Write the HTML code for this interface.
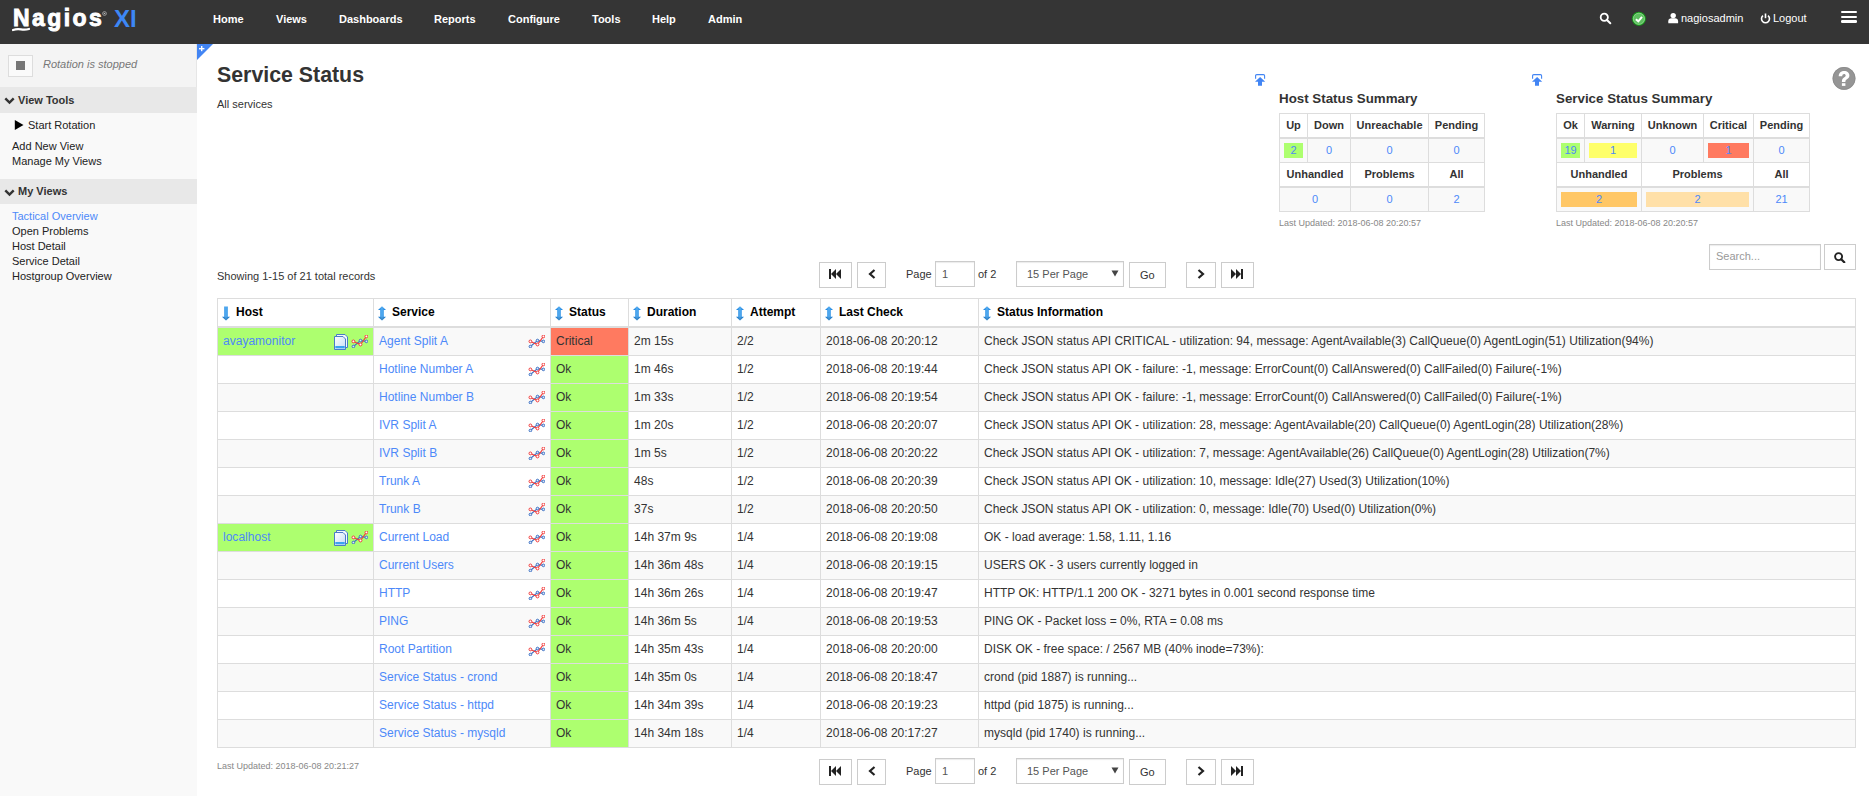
<!DOCTYPE html>
<html><head><meta charset="utf-8">
<style>
*{box-sizing:border-box;}
html,body{margin:0;padding:0;width:1869px;height:796px;overflow:hidden;background:#fff;font-family:"Liberation Sans",sans-serif;color:#333;}
a{color:#4d89f9;text-decoration:none;}
.abs{position:absolute;white-space:nowrap;}
#hdr{position:absolute;left:0;top:0;width:1869px;height:44px;background:#353535;overflow:hidden;}
#hdr .nav{position:absolute;top:13px;font-size:11px;font-weight:bold;color:#fff;white-space:nowrap;line-height:13px;}
#hdr .rt{position:absolute;top:12px;font-size:11px;color:#fff;white-space:nowrap;line-height:13px;}
#side{position:absolute;left:0;top:44px;width:197px;height:752px;background:#f9f9f9;}
#rot{position:absolute;left:0;top:0;width:197px;height:43px;background:#f4f4f4;border-right:1px solid #e6e6e6;}
.shead{position:absolute;left:0;width:197px;height:26px;background:#e8e8e8;font-size:11px;font-weight:bold;color:#333;}
.shead span{position:absolute;left:18px;top:7px;line-height:13px;}
.slink{position:absolute;left:12px;font-size:11px;color:#222;line-height:13px;white-space:nowrap;}
.btn{position:absolute;border:1px solid #ccc;background:#fff;}
.sum{position:absolute;border-collapse:separate;border-spacing:0;border-top:1px solid #ddd;border-left:1px solid #ddd;font-size:11px;}
.sum td{border-right:1px solid #ddd;border-bottom:1px solid #ddd;text-align:center;padding:0;height:24px;}
.sum tr.h td{font-weight:bold;background:#fff;color:#333;border-bottom:2px solid #ddd;height:25px;padding-bottom:2px;}
.sum tr.d td{background:#f9f9f9;color:#4d89f9;padding-bottom:1px;}
.box{display:block;margin:0 4px;height:15px;line-height:15px;}
#tbl td{letter-spacing:0.015px;}
#tbl{position:absolute;left:217px;top:298px;border-collapse:separate;border-spacing:0;table-layout:fixed;border-top:1px solid #ddd;border-left:1px solid #ddd;font-size:12px;}
#tbl th,#tbl td{border-right:1px solid #ddd;border-bottom:1px solid #ddd;padding:0 0 2px 5px;height:28px;white-space:nowrap;overflow:hidden;text-align:left;vertical-align:middle;position:relative;}
#tbl th{height:29px;border-bottom:2px solid #ddd;color:#000;font-weight:bold;background:#fff;padding:0 0 0 4px;}
#tbl tr.odd td{background:#f9f9f9;}
#tbl tr.even td{background:#fff;}
#tbl td.hup{background:#adff6f !important;}
#tbl td.ok{background:#adff6f !important;}
#tbl td.crit{background:#ff7a60 !important;}
#tbl th svg{vertical-align:middle;margin-right:5px;position:relative;top:1px;}
.gi{position:absolute;right:5px;top:7px;}
.di{position:absolute;right:24px;top:6px;}
.pg{position:absolute;font-size:11px;color:#333;}
</style></head><body>
<div id="hdr">
  
  <div class="abs" style="left:13px;top:3.5px;font-size:23px;font-weight:bold;color:#fff;letter-spacing:2.4px;line-height:28px;-webkit-text-stroke:0.9px #fff;">Nagios</div>
  <svg class="abs" style="left:102px;top:11px" width="5" height="5" viewBox="0 0 5 5"><circle cx="2.5" cy="2.5" r="1.9" fill="none" stroke="#bbb" stroke-width="0.7"/><circle cx="2.5" cy="2.5" r="0.8" fill="#bbb"/></svg>
  <div class="abs" style="left:114px;top:5px;font-size:24px;font-weight:bold;color:#3d87f5;line-height:28px;">XI</div>
  <svg class="abs" style="left:12px;top:27px" width="18" height="5" viewBox="0 0 18 5"><path d="M1,3 Q5,1.6 9,2.4 T17,2" fill="none" stroke="#fff" stroke-width="2.2" stroke-linecap="round"/></svg>
  <div class="nav" style="left:213px">Home</div>
  <div class="nav" style="left:276px">Views</div>
  <div class="nav" style="left:339px">Dashboards</div>
  <div class="nav" style="left:434px">Reports</div>
  <div class="nav" style="left:508px">Configure</div>
  <div class="nav" style="left:592px">Tools</div>
  <div class="nav" style="left:652px">Help</div>
  <div class="nav" style="left:708px">Admin</div>
  <!-- search icon -->
  <svg class="abs" style="left:1599px;top:12px" width="13" height="13" viewBox="0 0 13 13"><circle cx="5.3" cy="5.3" r="3.6" fill="none" stroke="#fff" stroke-width="1.8"/><line x1="7.9" y1="8" x2="11.3" y2="11.3" stroke="#fff" stroke-width="2" stroke-linecap="round"/></svg>
  <!-- green check -->
  <svg class="abs" style="left:1631px;top:11px" width="16" height="16" viewBox="0 0 16 16"><circle cx="7.9" cy="7.8" r="7.1" fill="#16941a"/><circle cx="7.9" cy="7.8" r="6" fill="#5dbf5f"/><circle cx="7.9" cy="7.8" r="5.6" fill="none" stroke="#9be09b" stroke-width="0.6"/><polyline points="4.9,8.2 7.3,10.3 11,5.9" fill="none" stroke="#fff" stroke-width="2"/></svg>
  <!-- user icon -->
  <svg class="abs" style="left:1668px;top:12px" width="11" height="12" viewBox="0 0 11 12"><circle cx="5.2" cy="3.6" r="2.7" fill="#fff"/><path d="M0.3,11.3 V9.2 C0.3,7.2 1.7,6.3 3.3,6.3 H7.1 C8.7,6.3 10.1,7.2 10.1,9.2 V11.3 Z" fill="#fff"/></svg>
  <div class="rt" style="left:1681px">nagiosadmin</div>
  <!-- power icon -->
  <svg class="abs" style="left:1760px;top:13px" width="11" height="11" viewBox="0 0 11 11"><path d="M3,2.6 A4,4 0 1 0 8,2.6" fill="none" stroke="#fff" stroke-width="1.6"/><line x1="5.5" y1="0.5" x2="5.5" y2="5.2" stroke="#fff" stroke-width="1.6"/></svg>
  <div class="rt" style="left:1773px">Logout</div>
  <!-- hamburger -->
  <div class="abs" style="left:1841px;top:11px;width:16px;height:2.4px;background:#fff;border-radius:1.2px;"></div>
  <div class="abs" style="left:1841px;top:15.7px;width:16px;height:2.4px;background:#fff;border-radius:1.2px;"></div>
  <div class="abs" style="left:1841px;top:20.4px;width:16px;height:2.4px;background:#fff;border-radius:1.2px;"></div>
</div>

<div id="side">
  <div id="rot">
    <div class="abs" style="left:8px;top:11px;width:25px;height:22px;border:1px solid #ddd;background:#fafafa;"></div>
    <div class="abs" style="left:16px;top:17px;width:9px;height:9px;background:#777;"></div>
    <div class="abs" style="left:43px;top:14px;font-size:11px;font-style:italic;color:#777;line-height:13px;">Rotation is stopped</div>
  </div>
  <div class="shead" style="top:43px"><svg class="abs" style="left:4px;top:10px" width="11" height="8" viewBox="0 0 11 8"><polyline points="1.3,1.4 5.5,5.6 9.7,1.4" fill="none" stroke="#333" stroke-width="2.4"/></svg><span>View Tools</span></div>
  <svg class="abs" style="left:14px;top:76px" width="10" height="10" viewBox="0 0 10 10"><polygon points="0.8,0 9.5,5 0.8,10" fill="#000"/></svg>
  <div class="slink" style="left:28px;top:75px">Start Rotation</div>
  <div class="slink" style="top:96px">Add New View</div>
  <div class="slink" style="top:111px">Manage My Views</div>
  <div class="shead" style="top:135px;height:25px"><svg class="abs" style="left:4px;top:10px" width="11" height="8" viewBox="0 0 11 8"><polyline points="1.3,1.4 5.5,5.6 9.7,1.4" fill="none" stroke="#333" stroke-width="2.4"/></svg><span style="top:6px">My Views</span></div>
  <div class="slink" style="top:166px;color:#4d89f9">Tactical Overview</div>
  <div class="slink" style="top:181px">Open Problems</div>
  <div class="slink" style="top:196px">Host Detail</div>
  <div class="slink" style="top:211px">Service Detail</div>
  <div class="slink" style="top:226px">Hostgroup Overview</div>
</div>
<!-- blue corner triangle -->
<svg class="abs" style="left:197px;top:44px" width="16" height="16" viewBox="0 0 16 16"><polygon points="0,0 16,0 0,16" fill="#4285f4"/><rect x="2" y="4" width="5.4" height="1.4" fill="#fff"/><rect x="4" y="2" width="1.4" height="5.2" fill="#fff"/></svg>

<div class="abs" style="left:217px;top:63px;font-size:21.33px;font-weight:bold;color:#333;line-height:25px;">Service Status</div>
<div class="abs" style="left:217px;top:98px;font-size:11px;color:#333;line-height:13px;">All services</div>

<!-- pins -->
<svg class="abs" style="left:1255px;top:74px" width="11" height="12" viewBox="0 0 11 12"><path d="M0.6,4.8 V1.8 Q0.6,0.6 1.8,0.6 H8.4 Q9.6,0.6 9.6,1.8 V4.8" fill="none" stroke="#4285f4" stroke-width="1.1"/><polygon points="5.1,2.9 0,7.7 3,7.7 3,11.8 7,11.8 7,7.7 10.2,7.7" fill="#4285f4"/></svg>
<svg class="abs" style="left:1532px;top:74px" width="11" height="12" viewBox="0 0 11 12"><path d="M0.6,4.8 V1.8 Q0.6,0.6 1.8,0.6 H8.4 Q9.6,0.6 9.6,1.8 V4.8" fill="none" stroke="#4285f4" stroke-width="1.1"/><polygon points="5.1,2.9 0,7.7 3,7.7 3,11.8 7,11.8 7,7.7 10.2,7.7" fill="#4285f4"/></svg>

<div class="abs" style="left:1279px;top:91px;font-size:13.33px;font-weight:bold;color:#333;line-height:15px;">Host Status Summary</div>
<table class="sum" style="left:1279px;top:113px;">
<tr class="h"><td style="width:28px">Up</td><td style="width:43px">Down</td><td style="width:78px">Unreachable</td><td style="width:56px">Pending</td></tr>
<tr class="d"><td><span class="box" style="background:#adff6f">2</span></td><td>0</td><td>0</td><td>0</td></tr>
<tr class="h"><td colspan="2">Unhandled</td><td>Problems</td><td>All</td></tr>
<tr class="d"><td colspan="2">0</td><td>0</td><td>2</td></tr>
</table>
<div class="abs" style="left:1279px;top:218px;font-size:9px;color:#888;line-height:11px;">Last Updated: 2018-06-08 20:20:57</div>

<div class="abs" style="left:1556px;top:91px;font-size:13.33px;font-weight:bold;color:#333;line-height:15px;">Service Status Summary</div>
<table class="sum" style="left:1556px;top:113px;">
<tr class="h"><td style="width:28px">Ok</td><td style="width:57px">Warning</td><td style="width:62px">Unknown</td><td style="width:50px">Critical</td><td style="width:56px">Pending</td></tr>
<tr class="d"><td><span class="box" style="background:#adff6f">19</span></td><td><span class="box" style="background:#feff6a">1</span></td><td>0</td><td><span class="box" style="background:#ff7a60">1</span></td><td>0</td></tr>
<tr class="h"><td colspan="2">Unhandled</td><td colspan="2">Problems</td><td>All</td></tr>
<tr class="d"><td colspan="2"><span class="box" style="background:#ffc766">2</span></td><td colspan="2"><span class="box" style="background:#ffe0a8">2</span></td><td>21</td></tr>
</table>
<div class="abs" style="left:1556px;top:218px;font-size:9px;color:#888;line-height:11px;">Last Updated: 2018-06-08 20:20:57</div>

<!-- help -->
<svg class="abs" style="left:1832px;top:67px" width="24" height="24" viewBox="0 0 24 24"><circle cx="12" cy="11.4" r="11.4" fill="#959595"/><circle cx="12" cy="11.4" r="11" fill="none" stroke="#8a8a8a" stroke-width="0.8"/><path d="M6.7,9.3 C6.7,5.8 9.3,4.1 12.2,4.1 C15.3,4.1 17.4,6 17.4,8.6 C17.4,10.8 16,11.8 14.6,12.6 C13.7,13.2 13.4,13.7 13.4,14.9 H9.9 C9.9,12.6 10.6,11.4 12,10.6 C13.2,9.9 13.7,9.4 13.7,8.6 C13.7,7.7 13,7.1 12.1,7.1 C11,7.1 10.3,7.9 10.2,9.3 Z" fill="#fff"/><rect x="9.9" y="16.2" width="3.5" height="2.7" fill="#fff"/></svg>

<div class="abs" style="left:217px;top:270px;font-size:11px;color:#333;line-height:13px;">Showing 1-15 of 21 total records</div>

<div class="btn" style="left:819px;top:262px;width:33px;height:26px;"></div>
<svg class="abs" style="left:829px;top:269px" width="12" height="10" viewBox="0 0 12 10"><rect x="0" y="0" width="2" height="10" fill="#222"/><polygon points="2,5 7,0 7,10" fill="#222"/><polygon points="7,5 12,0 12,10" fill="#222"/></svg>
<div class="btn" style="left:857px;top:262px;width:29px;height:26px;"></div>
<svg class="abs" style="left:868px;top:269px" width="8" height="10" viewBox="0 0 8 10"><polyline points="6.5,1 2,5 6.5,9" fill="none" stroke="#222" stroke-width="2.2"/></svg>
<div class="pg" style="left:906px;top:268px;line-height:13px;">Page</div>
<div class="btn" style="left:935px;top:261px;width:40px;height:26px;box-shadow:inset 0 1px 1px rgba(0,0,0,.08);"></div>
<div class="pg" style="left:942px;top:268px;line-height:13px;color:#555">1</div>
<div class="pg" style="left:978px;top:268px;line-height:13px;">of 2</div>
<div class="btn" style="left:1016px;top:261px;width:108px;height:26px;box-shadow:inset 0 1px 1px rgba(0,0,0,.08);"></div>
<div class="pg" style="left:1027px;top:268px;line-height:13px;color:#555">15 Per Page</div>
<svg class="abs" style="left:1111px;top:270px" width="8" height="7" viewBox="0 0 8 7"><polygon points="0.5,0.5 7.5,0.5 4,6.5" fill="#444"/></svg>
<div class="btn" style="left:1129px;top:262px;width:37px;height:26px;"></div>
<div class="pg" style="left:1140px;top:269px;line-height:13px;">Go</div>
<div class="btn" style="left:1186px;top:262px;width:30px;height:26px;"></div>
<svg class="abs" style="left:1197px;top:269px" width="8" height="10" viewBox="0 0 8 10"><polyline points="1.5,1 6,5 1.5,9" fill="none" stroke="#222" stroke-width="2.2"/></svg>
<div class="btn" style="left:1221px;top:262px;width:33px;height:26px;"></div>
<svg class="abs" style="left:1231px;top:269px" width="12" height="10" viewBox="0 0 12 10"><rect x="10" y="0" width="2" height="10" fill="#222"/><polygon points="10,5 5,0 5,10" fill="#222"/><polygon points="5,5 0,0 0,10" fill="#222"/></svg>
<div class="btn" style="left:819px;top:759px;width:33px;height:26px;"></div>
<svg class="abs" style="left:829px;top:766px" width="12" height="10" viewBox="0 0 12 10"><rect x="0" y="0" width="2" height="10" fill="#222"/><polygon points="2,5 7,0 7,10" fill="#222"/><polygon points="7,5 12,0 12,10" fill="#222"/></svg>
<div class="btn" style="left:857px;top:759px;width:29px;height:26px;"></div>
<svg class="abs" style="left:868px;top:766px" width="8" height="10" viewBox="0 0 8 10"><polyline points="6.5,1 2,5 6.5,9" fill="none" stroke="#222" stroke-width="2.2"/></svg>
<div class="pg" style="left:906px;top:765px;line-height:13px;">Page</div>
<div class="btn" style="left:935px;top:758px;width:40px;height:26px;box-shadow:inset 0 1px 1px rgba(0,0,0,.08);"></div>
<div class="pg" style="left:942px;top:765px;line-height:13px;color:#555">1</div>
<div class="pg" style="left:978px;top:765px;line-height:13px;">of 2</div>
<div class="btn" style="left:1016px;top:758px;width:108px;height:26px;box-shadow:inset 0 1px 1px rgba(0,0,0,.08);"></div>
<div class="pg" style="left:1027px;top:765px;line-height:13px;color:#555">15 Per Page</div>
<svg class="abs" style="left:1111px;top:767px" width="8" height="7" viewBox="0 0 8 7"><polygon points="0.5,0.5 7.5,0.5 4,6.5" fill="#444"/></svg>
<div class="btn" style="left:1129px;top:759px;width:37px;height:26px;"></div>
<div class="pg" style="left:1140px;top:766px;line-height:13px;">Go</div>
<div class="btn" style="left:1186px;top:759px;width:30px;height:26px;"></div>
<svg class="abs" style="left:1197px;top:766px" width="8" height="10" viewBox="0 0 8 10"><polyline points="1.5,1 6,5 1.5,9" fill="none" stroke="#222" stroke-width="2.2"/></svg>
<div class="btn" style="left:1221px;top:759px;width:33px;height:26px;"></div>
<svg class="abs" style="left:1231px;top:766px" width="12" height="10" viewBox="0 0 12 10"><rect x="10" y="0" width="2" height="10" fill="#222"/><polygon points="10,5 5,0 5,10" fill="#222"/><polygon points="5,5 0,0 0,10" fill="#222"/></svg>

<!-- search -->
<div class="btn" style="left:1709px;top:244px;width:112px;height:26px;box-shadow:inset 0 1px 1px rgba(0,0,0,.08);"></div>
<div class="abs" style="left:1716px;top:250px;font-size:11px;color:#999;line-height:13px;">Search...</div>
<div class="btn" style="left:1824px;top:244px;width:32px;height:26px;"></div>
<svg class="abs" style="left:1834px;top:252px" width="12" height="11" viewBox="0 0 12 11"><circle cx="4.6" cy="4.6" r="3.5" fill="none" stroke="#222" stroke-width="1.9"/><line x1="7.2" y1="7.2" x2="10.3" y2="10.3" stroke="#222" stroke-width="2.2" stroke-linecap="round"/></svg>

<table id="tbl">
<colgroup><col style="width:156px"><col style="width:177px"><col style="width:78px"><col style="width:103px"><col style="width:89px"><col style="width:158px"><col style="width:877px"></colgroup>
<tr><th><svg width="9" height="15" viewBox="0 0 9 15"><defs><linearGradient id="ga" x1="0" x2="1"><stop offset="0" stop-color="#0775d8"/><stop offset="0.5" stop-color="#56aef2"/><stop offset="1" stop-color="#0775d8"/></linearGradient><linearGradient id="gb" x1="0" x2="0" y1="0" y2="1"><stop offset="0" stop-color="#000" stop-opacity="0"/><stop offset="0.7" stop-color="#000" stop-opacity="0"/><stop offset="1" stop-color="#00509e" stop-opacity="0.4"/></linearGradient></defs><path d="M2.2,0.5 H5.8 V10.8 H8 L4,14.6 L0,10.8 H2.2 Z" fill="url(#ga)"/><path d="M2.2,0.5 H5.8 V10.8 H8 L4,14.6 L0,10.8 H2.2 Z" fill="url(#gb)"/></svg>Host</th><th><svg width="9" height="15" viewBox="0 0 9 15"><path d="M4,0.3 L8,3.9 H5.8 V10.7 H8 L4,14.6 L0,10.7 H2.2 V3.9 H0 Z" fill="url(#ga)"/><path d="M4,0.3 L8,3.9 H5.8 V10.7 H8 L4,14.6 L0,10.7 H2.2 V3.9 H0 Z" fill="url(#gb)"/></svg>Service</th><th><svg width="9" height="15" viewBox="0 0 9 15"><path d="M4,0.3 L8,3.9 H5.8 V10.7 H8 L4,14.6 L0,10.7 H2.2 V3.9 H0 Z" fill="url(#ga)"/><path d="M4,0.3 L8,3.9 H5.8 V10.7 H8 L4,14.6 L0,10.7 H2.2 V3.9 H0 Z" fill="url(#gb)"/></svg>Status</th><th><svg width="9" height="15" viewBox="0 0 9 15"><path d="M4,0.3 L8,3.9 H5.8 V10.7 H8 L4,14.6 L0,10.7 H2.2 V3.9 H0 Z" fill="url(#ga)"/><path d="M4,0.3 L8,3.9 H5.8 V10.7 H8 L4,14.6 L0,10.7 H2.2 V3.9 H0 Z" fill="url(#gb)"/></svg>Duration</th><th><svg width="9" height="15" viewBox="0 0 9 15"><path d="M4,0.3 L8,3.9 H5.8 V10.7 H8 L4,14.6 L0,10.7 H2.2 V3.9 H0 Z" fill="url(#ga)"/><path d="M4,0.3 L8,3.9 H5.8 V10.7 H8 L4,14.6 L0,10.7 H2.2 V3.9 H0 Z" fill="url(#gb)"/></svg>Attempt</th><th><svg width="9" height="15" viewBox="0 0 9 15"><path d="M4,0.3 L8,3.9 H5.8 V10.7 H8 L4,14.6 L0,10.7 H2.2 V3.9 H0 Z" fill="url(#ga)"/><path d="M4,0.3 L8,3.9 H5.8 V10.7 H8 L4,14.6 L0,10.7 H2.2 V3.9 H0 Z" fill="url(#gb)"/></svg>Last Check</th><th><svg width="9" height="15" viewBox="0 0 9 15"><path d="M4,0.3 L8,3.9 H5.8 V10.7 H8 L4,14.6 L0,10.7 H2.2 V3.9 H0 Z" fill="url(#ga)"/><path d="M4,0.3 L8,3.9 H5.8 V10.7 H8 L4,14.6 L0,10.7 H2.2 V3.9 H0 Z" fill="url(#gb)"/></svg>Status Information</th></tr>
<tr class="odd"><td class="c1 hup"><a>avayamonitor</a><svg class="di" width="15" height="16" viewBox="0 0 15 16"><defs><linearGradient id="dg" x1="0" y1="0" x2="1" y2="1"><stop offset="0" stop-color="#ffffff"/><stop offset="1" stop-color="#c6dcf5"/></linearGradient></defs><path d="M2.5,0.5 H11 L13.5,3 V13.5 H2.5 Z" fill="#f4f8fd" stroke="#4a7cc7" stroke-width="1"/><path d="M0.5,2.5 H9 L11.5,5 V15.5 H0.5 Z" fill="url(#dg)" stroke="#4a7cc7" stroke-width="1"/><rect x="1.3" y="12" width="9.4" height="2.3" fill="#3aa3f0"/></svg><svg class="gi" width="17" height="13" viewBox="0 0 17 13"><polyline points="2.4,11.5 9.5,5.5 15.4,6.4" fill="none" stroke="#3a70c4" stroke-width="1.1"/><polyline points="2.4,6.4 9.5,9.5 15.4,1.4" fill="none" stroke="#f23a3a" stroke-width="1.05"/><circle cx="2.4" cy="11.5" r="1.3" fill="#dfe8f7" stroke="#3a70c4" stroke-width="1"/><circle cx="9.5" cy="5.5" r="1.3" fill="#dfe8f7" stroke="#3a70c4" stroke-width="1"/><circle cx="15.4" cy="6.4" r="1.3" fill="#dfe8f7" stroke="#3a70c4" stroke-width="1"/><circle cx="2.4" cy="6.4" r="1.4" fill="#fff" stroke="#f23a3a" stroke-width="1"/><circle cx="9.5" cy="9.5" r="1.4" fill="#fff" stroke="#f23a3a" stroke-width="1"/><circle cx="15.4" cy="1.4" r="1.4" fill="#fff" stroke="#f23a3a" stroke-width="1"/></svg></td><td class="c2"><a>Agent Split A</a><svg class="gi" width="17" height="13" viewBox="0 0 17 13"><polyline points="2.4,11.5 9.5,5.5 15.4,6.4" fill="none" stroke="#3a70c4" stroke-width="1.1"/><polyline points="2.4,6.4 9.5,9.5 15.4,1.4" fill="none" stroke="#f23a3a" stroke-width="1.05"/><circle cx="2.4" cy="11.5" r="1.3" fill="#dfe8f7" stroke="#3a70c4" stroke-width="1"/><circle cx="9.5" cy="5.5" r="1.3" fill="#dfe8f7" stroke="#3a70c4" stroke-width="1"/><circle cx="15.4" cy="6.4" r="1.3" fill="#dfe8f7" stroke="#3a70c4" stroke-width="1"/><circle cx="2.4" cy="6.4" r="1.4" fill="#fff" stroke="#f23a3a" stroke-width="1"/><circle cx="9.5" cy="9.5" r="1.4" fill="#fff" stroke="#f23a3a" stroke-width="1"/><circle cx="15.4" cy="1.4" r="1.4" fill="#fff" stroke="#f23a3a" stroke-width="1"/></svg></td><td class="c3 crit">Critical</td><td>2m 15s</td><td>2/2</td><td>2018-06-08 20:20:12</td><td>Check JSON status API CRITICAL - utilization: 94, message: AgentAvailable(3) CallQueue(0) AgentLogin(51) Utilization(94%)</td></tr>
<tr class="even"><td class="c1"></td><td class="c2"><a>Hotline Number A</a><svg class="gi" width="17" height="13" viewBox="0 0 17 13"><polyline points="2.4,11.5 9.5,5.5 15.4,6.4" fill="none" stroke="#3a70c4" stroke-width="1.1"/><polyline points="2.4,6.4 9.5,9.5 15.4,1.4" fill="none" stroke="#f23a3a" stroke-width="1.05"/><circle cx="2.4" cy="11.5" r="1.3" fill="#dfe8f7" stroke="#3a70c4" stroke-width="1"/><circle cx="9.5" cy="5.5" r="1.3" fill="#dfe8f7" stroke="#3a70c4" stroke-width="1"/><circle cx="15.4" cy="6.4" r="1.3" fill="#dfe8f7" stroke="#3a70c4" stroke-width="1"/><circle cx="2.4" cy="6.4" r="1.4" fill="#fff" stroke="#f23a3a" stroke-width="1"/><circle cx="9.5" cy="9.5" r="1.4" fill="#fff" stroke="#f23a3a" stroke-width="1"/><circle cx="15.4" cy="1.4" r="1.4" fill="#fff" stroke="#f23a3a" stroke-width="1"/></svg></td><td class="c3 ok">Ok</td><td>1m 46s</td><td>1/2</td><td>2018-06-08 20:19:44</td><td>Check JSON status API OK - failure: -1, message: ErrorCount(0) CallAnswered(0) CallFailed(0) Failure(-1%)</td></tr>
<tr class="odd"><td class="c1"></td><td class="c2"><a>Hotline Number B</a><svg class="gi" width="17" height="13" viewBox="0 0 17 13"><polyline points="2.4,11.5 9.5,5.5 15.4,6.4" fill="none" stroke="#3a70c4" stroke-width="1.1"/><polyline points="2.4,6.4 9.5,9.5 15.4,1.4" fill="none" stroke="#f23a3a" stroke-width="1.05"/><circle cx="2.4" cy="11.5" r="1.3" fill="#dfe8f7" stroke="#3a70c4" stroke-width="1"/><circle cx="9.5" cy="5.5" r="1.3" fill="#dfe8f7" stroke="#3a70c4" stroke-width="1"/><circle cx="15.4" cy="6.4" r="1.3" fill="#dfe8f7" stroke="#3a70c4" stroke-width="1"/><circle cx="2.4" cy="6.4" r="1.4" fill="#fff" stroke="#f23a3a" stroke-width="1"/><circle cx="9.5" cy="9.5" r="1.4" fill="#fff" stroke="#f23a3a" stroke-width="1"/><circle cx="15.4" cy="1.4" r="1.4" fill="#fff" stroke="#f23a3a" stroke-width="1"/></svg></td><td class="c3 ok">Ok</td><td>1m 33s</td><td>1/2</td><td>2018-06-08 20:19:54</td><td>Check JSON status API OK - failure: -1, message: ErrorCount(0) CallAnswered(0) CallFailed(0) Failure(-1%)</td></tr>
<tr class="even"><td class="c1"></td><td class="c2"><a>IVR Split A</a><svg class="gi" width="17" height="13" viewBox="0 0 17 13"><polyline points="2.4,11.5 9.5,5.5 15.4,6.4" fill="none" stroke="#3a70c4" stroke-width="1.1"/><polyline points="2.4,6.4 9.5,9.5 15.4,1.4" fill="none" stroke="#f23a3a" stroke-width="1.05"/><circle cx="2.4" cy="11.5" r="1.3" fill="#dfe8f7" stroke="#3a70c4" stroke-width="1"/><circle cx="9.5" cy="5.5" r="1.3" fill="#dfe8f7" stroke="#3a70c4" stroke-width="1"/><circle cx="15.4" cy="6.4" r="1.3" fill="#dfe8f7" stroke="#3a70c4" stroke-width="1"/><circle cx="2.4" cy="6.4" r="1.4" fill="#fff" stroke="#f23a3a" stroke-width="1"/><circle cx="9.5" cy="9.5" r="1.4" fill="#fff" stroke="#f23a3a" stroke-width="1"/><circle cx="15.4" cy="1.4" r="1.4" fill="#fff" stroke="#f23a3a" stroke-width="1"/></svg></td><td class="c3 ok">Ok</td><td>1m 20s</td><td>1/2</td><td>2018-06-08 20:20:07</td><td>Check JSON status API OK - utilization: 28, message: AgentAvailable(20) CallQueue(0) AgentLogin(28) Utilization(28%)</td></tr>
<tr class="odd"><td class="c1"></td><td class="c2"><a>IVR Split B</a><svg class="gi" width="17" height="13" viewBox="0 0 17 13"><polyline points="2.4,11.5 9.5,5.5 15.4,6.4" fill="none" stroke="#3a70c4" stroke-width="1.1"/><polyline points="2.4,6.4 9.5,9.5 15.4,1.4" fill="none" stroke="#f23a3a" stroke-width="1.05"/><circle cx="2.4" cy="11.5" r="1.3" fill="#dfe8f7" stroke="#3a70c4" stroke-width="1"/><circle cx="9.5" cy="5.5" r="1.3" fill="#dfe8f7" stroke="#3a70c4" stroke-width="1"/><circle cx="15.4" cy="6.4" r="1.3" fill="#dfe8f7" stroke="#3a70c4" stroke-width="1"/><circle cx="2.4" cy="6.4" r="1.4" fill="#fff" stroke="#f23a3a" stroke-width="1"/><circle cx="9.5" cy="9.5" r="1.4" fill="#fff" stroke="#f23a3a" stroke-width="1"/><circle cx="15.4" cy="1.4" r="1.4" fill="#fff" stroke="#f23a3a" stroke-width="1"/></svg></td><td class="c3 ok">Ok</td><td>1m 5s</td><td>1/2</td><td>2018-06-08 20:20:22</td><td>Check JSON status API OK - utilization: 7, message: AgentAvailable(26) CallQueue(0) AgentLogin(28) Utilization(7%)</td></tr>
<tr class="even"><td class="c1"></td><td class="c2"><a>Trunk A</a><svg class="gi" width="17" height="13" viewBox="0 0 17 13"><polyline points="2.4,11.5 9.5,5.5 15.4,6.4" fill="none" stroke="#3a70c4" stroke-width="1.1"/><polyline points="2.4,6.4 9.5,9.5 15.4,1.4" fill="none" stroke="#f23a3a" stroke-width="1.05"/><circle cx="2.4" cy="11.5" r="1.3" fill="#dfe8f7" stroke="#3a70c4" stroke-width="1"/><circle cx="9.5" cy="5.5" r="1.3" fill="#dfe8f7" stroke="#3a70c4" stroke-width="1"/><circle cx="15.4" cy="6.4" r="1.3" fill="#dfe8f7" stroke="#3a70c4" stroke-width="1"/><circle cx="2.4" cy="6.4" r="1.4" fill="#fff" stroke="#f23a3a" stroke-width="1"/><circle cx="9.5" cy="9.5" r="1.4" fill="#fff" stroke="#f23a3a" stroke-width="1"/><circle cx="15.4" cy="1.4" r="1.4" fill="#fff" stroke="#f23a3a" stroke-width="1"/></svg></td><td class="c3 ok">Ok</td><td>48s</td><td>1/2</td><td>2018-06-08 20:20:39</td><td>Check JSON status API OK - utilization: 10, message: Idle(27) Used(3) Utilization(10%)</td></tr>
<tr class="odd"><td class="c1"></td><td class="c2"><a>Trunk B</a><svg class="gi" width="17" height="13" viewBox="0 0 17 13"><polyline points="2.4,11.5 9.5,5.5 15.4,6.4" fill="none" stroke="#3a70c4" stroke-width="1.1"/><polyline points="2.4,6.4 9.5,9.5 15.4,1.4" fill="none" stroke="#f23a3a" stroke-width="1.05"/><circle cx="2.4" cy="11.5" r="1.3" fill="#dfe8f7" stroke="#3a70c4" stroke-width="1"/><circle cx="9.5" cy="5.5" r="1.3" fill="#dfe8f7" stroke="#3a70c4" stroke-width="1"/><circle cx="15.4" cy="6.4" r="1.3" fill="#dfe8f7" stroke="#3a70c4" stroke-width="1"/><circle cx="2.4" cy="6.4" r="1.4" fill="#fff" stroke="#f23a3a" stroke-width="1"/><circle cx="9.5" cy="9.5" r="1.4" fill="#fff" stroke="#f23a3a" stroke-width="1"/><circle cx="15.4" cy="1.4" r="1.4" fill="#fff" stroke="#f23a3a" stroke-width="1"/></svg></td><td class="c3 ok">Ok</td><td>37s</td><td>1/2</td><td>2018-06-08 20:20:50</td><td>Check JSON status API OK - utilization: 0, message: Idle(70) Used(0) Utilization(0%)</td></tr>
<tr class="even"><td class="c1 hup"><a>localhost</a><svg class="di" width="15" height="16" viewBox="0 0 15 16"><defs><linearGradient id="dg" x1="0" y1="0" x2="1" y2="1"><stop offset="0" stop-color="#ffffff"/><stop offset="1" stop-color="#c6dcf5"/></linearGradient></defs><path d="M2.5,0.5 H11 L13.5,3 V13.5 H2.5 Z" fill="#f4f8fd" stroke="#4a7cc7" stroke-width="1"/><path d="M0.5,2.5 H9 L11.5,5 V15.5 H0.5 Z" fill="url(#dg)" stroke="#4a7cc7" stroke-width="1"/><rect x="1.3" y="12" width="9.4" height="2.3" fill="#3aa3f0"/></svg><svg class="gi" width="17" height="13" viewBox="0 0 17 13"><polyline points="2.4,11.5 9.5,5.5 15.4,6.4" fill="none" stroke="#3a70c4" stroke-width="1.1"/><polyline points="2.4,6.4 9.5,9.5 15.4,1.4" fill="none" stroke="#f23a3a" stroke-width="1.05"/><circle cx="2.4" cy="11.5" r="1.3" fill="#dfe8f7" stroke="#3a70c4" stroke-width="1"/><circle cx="9.5" cy="5.5" r="1.3" fill="#dfe8f7" stroke="#3a70c4" stroke-width="1"/><circle cx="15.4" cy="6.4" r="1.3" fill="#dfe8f7" stroke="#3a70c4" stroke-width="1"/><circle cx="2.4" cy="6.4" r="1.4" fill="#fff" stroke="#f23a3a" stroke-width="1"/><circle cx="9.5" cy="9.5" r="1.4" fill="#fff" stroke="#f23a3a" stroke-width="1"/><circle cx="15.4" cy="1.4" r="1.4" fill="#fff" stroke="#f23a3a" stroke-width="1"/></svg></td><td class="c2"><a>Current Load</a><svg class="gi" width="17" height="13" viewBox="0 0 17 13"><polyline points="2.4,11.5 9.5,5.5 15.4,6.4" fill="none" stroke="#3a70c4" stroke-width="1.1"/><polyline points="2.4,6.4 9.5,9.5 15.4,1.4" fill="none" stroke="#f23a3a" stroke-width="1.05"/><circle cx="2.4" cy="11.5" r="1.3" fill="#dfe8f7" stroke="#3a70c4" stroke-width="1"/><circle cx="9.5" cy="5.5" r="1.3" fill="#dfe8f7" stroke="#3a70c4" stroke-width="1"/><circle cx="15.4" cy="6.4" r="1.3" fill="#dfe8f7" stroke="#3a70c4" stroke-width="1"/><circle cx="2.4" cy="6.4" r="1.4" fill="#fff" stroke="#f23a3a" stroke-width="1"/><circle cx="9.5" cy="9.5" r="1.4" fill="#fff" stroke="#f23a3a" stroke-width="1"/><circle cx="15.4" cy="1.4" r="1.4" fill="#fff" stroke="#f23a3a" stroke-width="1"/></svg></td><td class="c3 ok">Ok</td><td>14h 37m 9s</td><td>1/4</td><td>2018-06-08 20:19:08</td><td>OK - load average: 1.58, 1.11, 1.16</td></tr>
<tr class="odd"><td class="c1"></td><td class="c2"><a>Current Users</a><svg class="gi" width="17" height="13" viewBox="0 0 17 13"><polyline points="2.4,11.5 9.5,5.5 15.4,6.4" fill="none" stroke="#3a70c4" stroke-width="1.1"/><polyline points="2.4,6.4 9.5,9.5 15.4,1.4" fill="none" stroke="#f23a3a" stroke-width="1.05"/><circle cx="2.4" cy="11.5" r="1.3" fill="#dfe8f7" stroke="#3a70c4" stroke-width="1"/><circle cx="9.5" cy="5.5" r="1.3" fill="#dfe8f7" stroke="#3a70c4" stroke-width="1"/><circle cx="15.4" cy="6.4" r="1.3" fill="#dfe8f7" stroke="#3a70c4" stroke-width="1"/><circle cx="2.4" cy="6.4" r="1.4" fill="#fff" stroke="#f23a3a" stroke-width="1"/><circle cx="9.5" cy="9.5" r="1.4" fill="#fff" stroke="#f23a3a" stroke-width="1"/><circle cx="15.4" cy="1.4" r="1.4" fill="#fff" stroke="#f23a3a" stroke-width="1"/></svg></td><td class="c3 ok">Ok</td><td>14h 36m 48s</td><td>1/4</td><td>2018-06-08 20:19:15</td><td>USERS OK - 3 users currently logged in</td></tr>
<tr class="even"><td class="c1"></td><td class="c2"><a>HTTP</a><svg class="gi" width="17" height="13" viewBox="0 0 17 13"><polyline points="2.4,11.5 9.5,5.5 15.4,6.4" fill="none" stroke="#3a70c4" stroke-width="1.1"/><polyline points="2.4,6.4 9.5,9.5 15.4,1.4" fill="none" stroke="#f23a3a" stroke-width="1.05"/><circle cx="2.4" cy="11.5" r="1.3" fill="#dfe8f7" stroke="#3a70c4" stroke-width="1"/><circle cx="9.5" cy="5.5" r="1.3" fill="#dfe8f7" stroke="#3a70c4" stroke-width="1"/><circle cx="15.4" cy="6.4" r="1.3" fill="#dfe8f7" stroke="#3a70c4" stroke-width="1"/><circle cx="2.4" cy="6.4" r="1.4" fill="#fff" stroke="#f23a3a" stroke-width="1"/><circle cx="9.5" cy="9.5" r="1.4" fill="#fff" stroke="#f23a3a" stroke-width="1"/><circle cx="15.4" cy="1.4" r="1.4" fill="#fff" stroke="#f23a3a" stroke-width="1"/></svg></td><td class="c3 ok">Ok</td><td>14h 36m 26s</td><td>1/4</td><td>2018-06-08 20:19:47</td><td>HTTP OK: HTTP/1.1 200 OK - 3271 bytes in 0.001 second response time</td></tr>
<tr class="odd"><td class="c1"></td><td class="c2"><a>PING</a><svg class="gi" width="17" height="13" viewBox="0 0 17 13"><polyline points="2.4,11.5 9.5,5.5 15.4,6.4" fill="none" stroke="#3a70c4" stroke-width="1.1"/><polyline points="2.4,6.4 9.5,9.5 15.4,1.4" fill="none" stroke="#f23a3a" stroke-width="1.05"/><circle cx="2.4" cy="11.5" r="1.3" fill="#dfe8f7" stroke="#3a70c4" stroke-width="1"/><circle cx="9.5" cy="5.5" r="1.3" fill="#dfe8f7" stroke="#3a70c4" stroke-width="1"/><circle cx="15.4" cy="6.4" r="1.3" fill="#dfe8f7" stroke="#3a70c4" stroke-width="1"/><circle cx="2.4" cy="6.4" r="1.4" fill="#fff" stroke="#f23a3a" stroke-width="1"/><circle cx="9.5" cy="9.5" r="1.4" fill="#fff" stroke="#f23a3a" stroke-width="1"/><circle cx="15.4" cy="1.4" r="1.4" fill="#fff" stroke="#f23a3a" stroke-width="1"/></svg></td><td class="c3 ok">Ok</td><td>14h 36m 5s</td><td>1/4</td><td>2018-06-08 20:19:53</td><td>PING OK - Packet loss = 0%, RTA = 0.08 ms</td></tr>
<tr class="even"><td class="c1"></td><td class="c2"><a>Root Partition</a><svg class="gi" width="17" height="13" viewBox="0 0 17 13"><polyline points="2.4,11.5 9.5,5.5 15.4,6.4" fill="none" stroke="#3a70c4" stroke-width="1.1"/><polyline points="2.4,6.4 9.5,9.5 15.4,1.4" fill="none" stroke="#f23a3a" stroke-width="1.05"/><circle cx="2.4" cy="11.5" r="1.3" fill="#dfe8f7" stroke="#3a70c4" stroke-width="1"/><circle cx="9.5" cy="5.5" r="1.3" fill="#dfe8f7" stroke="#3a70c4" stroke-width="1"/><circle cx="15.4" cy="6.4" r="1.3" fill="#dfe8f7" stroke="#3a70c4" stroke-width="1"/><circle cx="2.4" cy="6.4" r="1.4" fill="#fff" stroke="#f23a3a" stroke-width="1"/><circle cx="9.5" cy="9.5" r="1.4" fill="#fff" stroke="#f23a3a" stroke-width="1"/><circle cx="15.4" cy="1.4" r="1.4" fill="#fff" stroke="#f23a3a" stroke-width="1"/></svg></td><td class="c3 ok">Ok</td><td>14h 35m 43s</td><td>1/4</td><td>2018-06-08 20:20:00</td><td>DISK OK - free space: / 2567 MB (40% inode=73%):</td></tr>
<tr class="odd"><td class="c1"></td><td class="c2"><a>Service Status - crond</a></td><td class="c3 ok">Ok</td><td>14h 35m 0s</td><td>1/4</td><td>2018-06-08 20:18:47</td><td>crond (pid 1887) is running...</td></tr>
<tr class="even"><td class="c1"></td><td class="c2"><a>Service Status - httpd</a></td><td class="c3 ok">Ok</td><td>14h 34m 39s</td><td>1/4</td><td>2018-06-08 20:19:23</td><td>httpd (pid 1875) is running...</td></tr>
<tr class="odd"><td class="c1"></td><td class="c2"><a>Service Status - mysqld</a></td><td class="c3 ok">Ok</td><td>14h 34m 18s</td><td>1/4</td><td>2018-06-08 20:17:27</td><td>mysqld (pid 1740) is running...</td></tr>
</table>
<div class="abs" style="left:217px;top:761px;font-size:9px;color:#888;line-height:11px;">Last Updated: 2018-06-08 20:21:27</div>
</body></html>
